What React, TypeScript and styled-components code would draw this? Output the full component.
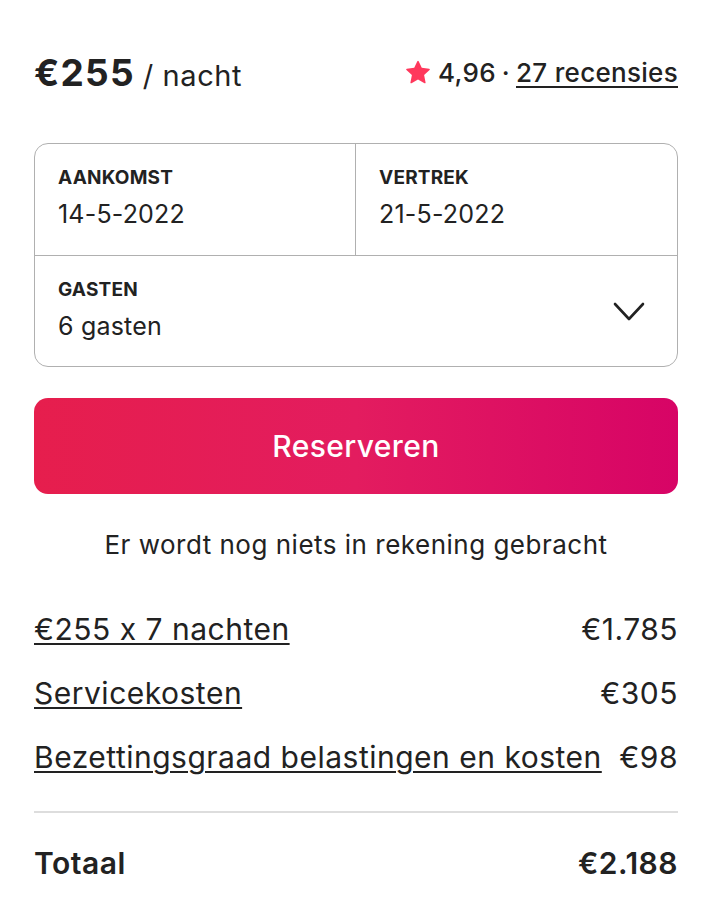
import React from 'react';
import styled, { createGlobalStyle } from 'styled-components';

const GlobalStyle = createGlobalStyle`
    html, body {
        margin: 0;
        padding: 0;
        background: #fff;
    }
    body {
        font-family: Inter, "Noto Sans", sans-serif;
        font-feature-settings: "calt" 0;
        color: #222222;
    }
`;

const Card = styled.div`
    width: 644px;
    padding: 48px 38px 24px 34px;
`;

const Header = styled.div`
    display: flex;
    align-items: center;
    justify-content: space-between;
    height: 48px;
`;

const Price = styled.div`
    display: flex;
    align-items: baseline;
    gap: 8px;
    strong {
        font-size: 37px;
        font-weight: 700;
        letter-spacing: 1.2px;
    }
    span {
        font-size: 29px;
        font-weight: 400;
        letter-spacing: 0.6px;
    }
`;

const Rating = styled.div`
    display: flex;
    align-items: center;
    font-size: 26px;
    font-weight: 500;
    letter-spacing: 0.3px;
    svg {
        margin-right: 8px;
    }
    .dot {
        margin: 0 6px;
    }
    a {
        color: #222222;
        text-decoration: underline;
        text-underline-offset: 4px;
        text-decoration-thickness: 2px;
    }
`;

const Picker = styled.div`
    margin-top: 47px;
    border: 1px solid #b0b0b0;
    border-radius: 14px;
    display: grid;
    grid-template-columns: 1fr 1fr;
    overflow: hidden;
`;

const Cell = styled.div<{ $wide?: boolean; $divider?: boolean }>`
    grid-column: ${p => (p.$wide ? '1 / 3' : 'auto')};
    height: 111px;
    box-sizing: border-box;
    padding: 23px 24px 0 23px;
    border-right: ${p => (p.$divider ? '1px solid #b0b0b0' : 'none')};
    border-top: ${p => (p.$wide ? '1px solid #b0b0b0' : 'none')};
    display: flex;
    align-items: flex-start;
    justify-content: space-between;
`;

const Label = styled.div`
    font-size: 19px;
    font-weight: 700;
    line-height: 22px;
    letter-spacing: 0.2px;
`;

const Value = styled.div`
    margin-top: 10px;
    font-size: 25px;
    line-height: 30px;
    font-weight: 400;
    letter-spacing: 0.2px;
`;

const Chevron = styled.svg`
    align-self: center;
    margin: -22px 8px 0 0;
`;

const ReserveButton = styled.button`
    display: block;
    width: 100%;
    height: 96px;
    margin-top: 31px;
    border: none;
    border-radius: 14px;
    background: linear-gradient(to right, #e61e4d 0%, #e31c5f 50%, #d70466 100%);
    color: #fff;
    font-family: Inter, "Noto Sans", sans-serif;
    font-size: 30px;
    font-weight: 500;
    letter-spacing: 0.4px;
    cursor: pointer;
`;

const Note = styled.p`
    margin: 35px 0 0;
    text-align: center;
    font-size: 26px;
    line-height: 32px;
    letter-spacing: 0.5px;
`;

const Lines = styled.div`
    margin-top: 36px;
`;

const Line = styled.div<{ $total?: boolean }>`
    display: flex;
    align-items: center;
    justify-content: space-between;
    height: 64px;
    font-size: 30px;
    font-weight: ${p => (p.$total ? 600 : 400)};
    letter-spacing: 0.5px;
    a {
        color: #222222;
        text-decoration: underline;
        text-underline-offset: 3px;
        text-decoration-thickness: 1.5px;
    }
`;

const Divider = styled.hr`
    margin: 22px 0 18px;
    border: none;
    border-top: 2px solid #dddddd;
`;

const fees = [
    { label: '€255 x 7 nachten', amount: '€1.785' },
    { label: 'Servicekosten', amount: '€305' },
    { label: 'Bezettingsgraad belastingen en kosten', amount: '€98' },
];

export default function App() {
    return (
        <>
            <GlobalStyle />
            <Card>
                <Header>
                    <Price>
                        <strong>€255</strong>
                        <span>/ nacht</span>
                    </Price>
                    <Rating>
                        <svg width="24" height="24" viewBox="0 0 32 32" fill="#ff385c">
                            <path d="M15.1 1.58l-4.13 8.88-9.86 1.27a1 1 0 0 0-.54 1.74l7.3 6.57-1.97 9.85a1 1 0 0 0 1.48 1.06l8.62-5 8.63 5a1 1 0 0 0 1.48-1.06l-1.97-9.850 7.3-6.57a1 1 0 0 0-.55-1.73l-9.86-1.28-4.12-8.88a1 1 0 0 0-1.82 0z" />
                        </svg>
                        <span>4,96</span>
                        <span className="dot">·</span>
                        <a href="#">27 recensies</a>
                    </Rating>
                </Header>

                <Picker>
                    <Cell $divider>
                        <div>
                            <Label>AANKOMST</Label>
                            <Value>14-5-2022</Value>
                        </div>
                    </Cell>
                    <Cell>
                        <div>
                            <Label>VERTREK</Label>
                            <Value>21-5-2022</Value>
                        </div>
                    </Cell>
                    <Cell $wide>
                        <div>
                            <Label>GASTEN</Label>
                            <Value>6 gasten</Value>
                        </div>
                        <Chevron width="32" height="20" viewBox="0 0 32 20" fill="none" stroke="#222222" strokeWidth="2.6" strokeLinecap="round" strokeLinejoin="round">
                            <path d="M2 2l14 15L30 2" />
                        </Chevron>
                    </Cell>
                </Picker>

                <ReserveButton>Reserveren</ReserveButton>

                <Note>Er wordt nog niets in rekening gebracht</Note>

                <Lines>
                    {fees.map(f => (
                        <Line key={f.label}>
                            <a href="#">{f.label}</a>
                            <span>{f.amount}</span>
                        </Line>
                    ))}
                </Lines>

                <Divider />

                <Line $total>
                    <span>Totaal</span>
                    <span>€2.188</span>
                </Line>
            </Card>
        </>
    );
}
